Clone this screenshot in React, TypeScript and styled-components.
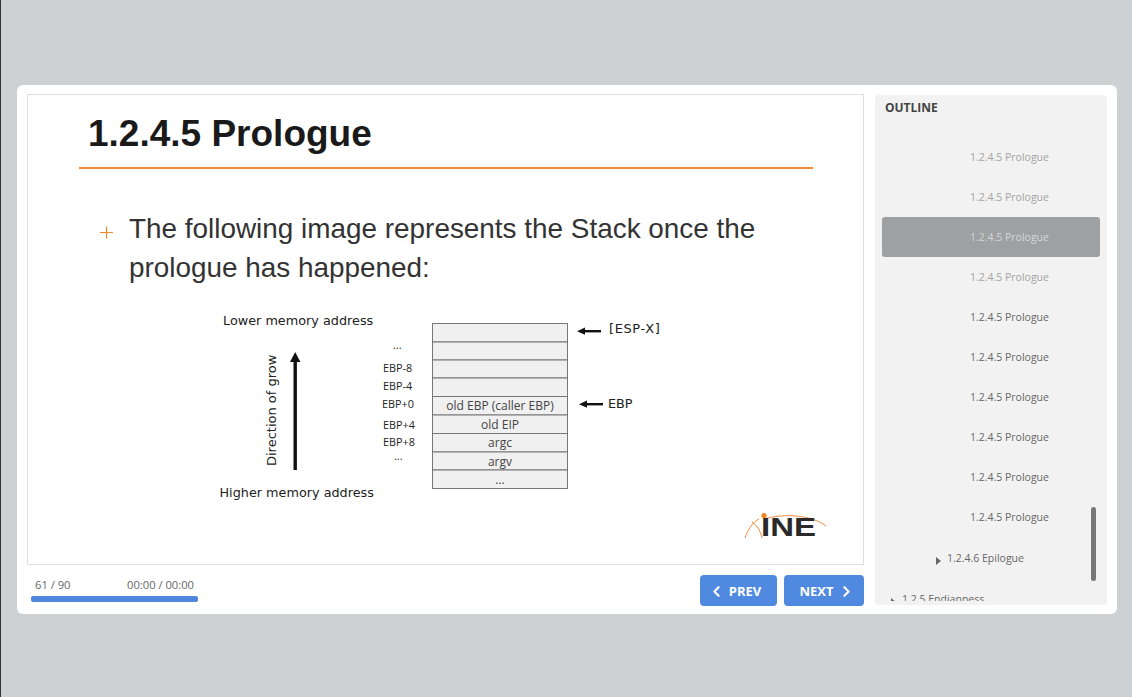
import { FC } from "react";
import styled, { createGlobalStyle } from "styled-components";
import { ChevronLeft, ChevronRight } from "lucide-react";

const GlobalStyle = createGlobalStyle`
  html, body {
    margin: 0;
    padding: 0;
    background: #cdd1d4;
  }
`;

type Tone = "muted" | "selected" | "normal";

const outlineItems: Tone[] = [
  "muted",
  "muted",
  "selected",
  "muted",
  "normal",
  "normal",
  "normal",
  "normal",
  "normal",
  "normal",
];

const stackRows = [
  { y: 323.5, h: 18.5, label: "" },
  { y: 342, h: 18, label: "" },
  { y: 360, h: 18, label: "" },
  { y: 378, h: 18.5, label: "" },
  { y: 396.5, h: 18.5, label: "old EBP (caller EBP)" },
  { y: 415, h: 18.5, label: "old EIP" },
  { y: 433.5, h: 18.5, label: "argc" },
  { y: 452, h: 18, label: "argv" },
  { y: 470, h: 18.5, label: "..." },
];

const offsets = [
  { x: 393, y: 349, label: "..." },
  { x: 383, y: 372, label: "EBP-8" },
  { x: 383, y: 390, label: "EBP-4" },
  { x: 382, y: 408, label: "EBP+0" },
  { x: 383, y: 429, label: "EBP+4" },
  { x: 383, y: 446, label: "EBP+8" },
  { x: 394, y: 460, label: "..." },
];

const StackDiagram: FC = () => (
  <DiagramSvg viewBox="210 308 460 192">
    <text x="223" y="325" fontSize="12.8" fill="#222">
      Lower memory address
    </text>
    <text x="219.5" y="497" fontSize="12.8" fill="#222">
      Higher memory address
    </text>
    <text
      transform="translate(276 466) rotate(-90)"
      fontSize="13"
      fill="#222"
    >
      Direction of grow
    </text>
    <rect x="293.5" y="360" width="3.4" height="110" fill="#111" />
    <polygon points="295.2,352 290,362 300.4,362" fill="#111" />
    {offsets.map((o) => (
      <OffsetLabel key={o.label + o.y} x={o.x} y={o.y}>
        {o.label}
      </OffsetLabel>
    ))}
    {stackRows.map((row) => (
      <g key={row.y}>
        <rect
          x="432.5"
          y={row.y}
          width="135"
          height={row.h}
          fill="#f0f0f0"
          stroke="#777"
        />
        <StackLabel x="500" y={row.y + 13.5}>
          {row.label}
        </StackLabel>
      </g>
    ))}
    <rect x="584" y="330" width="17" height="2.4" fill="#111" />
    <polygon points="577,331.2 585,327.6 585,334.8" fill="#111" />
    <text x="609" y="333" fontSize="13" letterSpacing="0.6" fill="#222">
      [ESP-X]
    </text>
    <rect x="586" y="403" width="17" height="2.4" fill="#111" />
    <polygon points="579,404.2 587,400.6 587,407.8" fill="#111" />
    <text x="608" y="408" fontSize="12.8" fill="#222">
      EBP
    </text>
  </DiagramSvg>
);

const IneLogo: FC = () => (
  <LogoSvg viewBox="0 0 84 30">
    <path
      d="M1 26 C4 17 9 10 15 7 M18 26 C17 20 13 13 8 10"
      fill="none"
      stroke="#f08a3c"
      strokeWidth="1"
    />
    <path
      d="M20 7 C40 1 68 3 82 14"
      fill="none"
      stroke="#f08a3c"
      strokeWidth="1"
    />
    <circle cx="20" cy="3.6" r="2.6" fill="#f5821f" />
    <LogoText x="17" y="24" textLength="55" lengthAdjust="spacingAndGlyphs">
      INE
    </LogoText>
  </LogoSvg>
);

const App: FC = () => (
  <>
    <GlobalStyle />
    <Page>
      <Card>
        <MainColumn>
          <Slide>
            <TitleBlock>
              <Title>1.2.4.5 Prologue</Title>
            </TitleBlock>
            <Bullet>
              <PlusIcon viewBox="0 0 15 15">
                <path d="M7.5 1.5v12M1 7.5h13" stroke="#f5872b" strokeWidth="1.2" />
              </PlusIcon>
              <BulletText>
                The following image represents the Stack once the prologue has
                happened:
              </BulletText>
            </Bullet>
            <StackDiagram />
            <IneLogo />
          </Slide>
          <Footer>
            <Progress>
              <Counters>
                <span>61 / 90</span>
                <span>00:00 / 00:00</span>
              </Counters>
              <ProgressBar />
            </Progress>
            <Buttons>
              <NavButton $width={77} $shift={-4}>
                <ChevronLeft size={17} strokeWidth={3} />
                PREV
              </NavButton>
              <NavButton $width={80} $shift={3}>
                NEXT
                <ChevronRight size={17} strokeWidth={3} />
              </NavButton>
            </Buttons>
          </Footer>
        </MainColumn>
        <Sidebar>
          <SidebarTitle>OUTLINE</SidebarTitle>
          <OutlineList>
            {outlineItems.map((tone, i) => (
              <OutlineRow key={i} $tone={tone}>
                1.2.4.5 Prologue
              </OutlineRow>
            ))}
            <BranchRow $indent={54}>
              <Caret />
              1.2.4.6 Epilogue
            </BranchRow>
            <BranchRow $indent={9}>
              <Caret />
              1.2.5 Endianness
            </BranchRow>
          </OutlineList>
          <Scrollbar />
        </Sidebar>
      </Card>
    </Page>
  </>
);

export default App;

const Page = styled.div`
  box-sizing: border-box;
  height: 697px;
  padding: 85px 0 0 16px;
  border-left: 1px solid #333;
  background: #cdd1d4;
`;

const Card = styled.div`
  box-sizing: border-box;
  display: flex;
  gap: 11px;
  width: 1100px;
  height: 529px;
  padding: 9px 10px 8px;
  background: #fff;
  border-radius: 6px;
`;

const MainColumn = styled.div`
  display: flex;
  flex-direction: column;
  width: 837px;
`;

const Slide = styled.div`
  box-sizing: border-box;
  display: flex;
  flex: none;
  flex-direction: column;
  height: 471px;
  border: 1px solid #dedede;
  font-family: "Liberation Sans", Arial, sans-serif;
`;

const TitleBlock = styled.div`
  box-sizing: border-box;
  height: 74px;
  margin: 0 50px 0 51px;
  padding-left: 9px;
  border-bottom: 2px solid #f08a3c;
`;

const Title = styled.h1`
  margin: 0;
  font-size: 37px;
  line-height: 77px;
  font-weight: 700;
  color: #1a1a1a;
`;

const Bullet = styled.div`
  display: flex;
  gap: 15px;
  margin: 40px 60px 0 71px;
`;

const PlusIcon = styled.svg`
  flex: none;
  width: 15px;
  height: 15px;
  margin-top: 16px;
`;

const BulletText = styled.p`
  margin: 0;
  font-size: 27.9px;
  line-height: 39px;
  color: #333;
`;

const DiagramSvg = styled.svg`
  display: block;
  flex: none;
  width: 460px;
  height: 192px;
  margin: 21px 0 0 182px;
  font-family: "DejaVu Sans", Verdana, sans-serif;
`;

const OffsetLabel = styled.text`
  font-size: 10.8px;
  fill: #222;
  font-family: "Open Sans", sans-serif;
`;

const StackLabel = styled.text`
  font-size: 12px;
  fill: #444;
  text-anchor: middle;
  font-family: "Open Sans", sans-serif;
`;

const LogoSvg = styled.svg`
  display: block;
  flex: none;
  align-self: flex-end;
  width: 84px;
  height: 30px;
  margin: 12px 35px 0 0;
`;

const LogoText = styled.text`
  font-family: "Liberation Sans", Arial, sans-serif;
  font-weight: 700;
  font-size: 25px;
  fill: #2a2a2a;
`;

const Footer = styled.div`
  display: flex;
  justify-content: space-between;
  align-items: flex-start;
  flex: 1;
  padding-top: 10px;
`;

const Progress = styled.div`
  width: 167px;
  margin-left: 4px;
`;

const Counters = styled.div`
  display: flex;
  justify-content: space-between;
  padding: 1px 4px 0 4px;
  font-family: "Open Sans", sans-serif;
  font-size: 11.2px;
  line-height: 18px;
  color: #666;
`;

const ProgressBar = styled.div`
  height: 6px;
  margin-top: 2px;
  background: #4f87de;
  border-radius: 2px;
`;

const Buttons = styled.div`
  display: flex;
  gap: 7px;
`;

const NavButton = styled.button<{ $width: number; $shift: number }>`
  display: flex;
  align-items: center;
  justify-content: center;
  gap: 4px;
  width: ${(p) => p.$width}px;
  height: 31px;
  padding: 1px ${(p) => Math.max(-p.$shift, 0) * 2}px 0
    ${(p) => Math.max(p.$shift, 0) * 2}px;
  border: none;
  border-radius: 4px;
  background: #5089e0;
  color: #fff;
  font-family: "Open Sans", sans-serif;
  font-size: 13px;
  font-weight: 700;
`;

const Sidebar = styled.aside`
  position: relative;
  box-sizing: border-box;
  width: 232px;
  height: 510px;
  margin-top: 1px;
  padding-bottom: 4px;
  display: flex;
  flex-direction: column;
  background: #f2f2f2;
  border-radius: 4px;
  font-family: "Open Sans", sans-serif;
`;

const SidebarTitle = styled.div`
  flex: none;
  height: 42px;
  padding: 4px 0 0 10px;
  box-sizing: border-box;
  font-size: 12px;
  line-height: 17px;
  font-weight: 700;
  color: #444;
`;

const OutlineList = styled.div`
  flex: 1;
  min-height: 0;
  overflow: hidden;
  padding: 0 7px;
`;

const toneColor: Record<Tone, string> = {
  muted: "#a3a3a3",
  selected: "#d4d6d7",
  normal: "#666",
};

const OutlineRow = styled.div<{ $tone: Tone }>`
  box-sizing: border-box;
  height: 40px;
  padding-left: 88px;
  font-size: 10.5px;
  line-height: 40px;
  color: ${(p) => toneColor[p.$tone]};
  background: ${(p) => (p.$tone === "selected" ? "#9da1a4" : "transparent")};
  border-radius: 3px;
`;

const BranchRow = styled.div<{ $indent: number }>`
  display: flex;
  align-items: center;
  height: 40px;
  padding-left: ${(p) => p.$indent}px;
  margin-top: 1px;
  font-size: 10.5px;
  color: #666;
  white-space: nowrap;
`;

const Caret = styled.span`
  flex: none;
  width: 0;
  height: 0;
  margin: 5px 6px 0 0;
  border-top: 4px solid transparent;
  border-bottom: 4px solid transparent;
  border-left: 5px solid #666;
`;

const Scrollbar = styled.div`
  position: absolute;
  top: 412px;
  right: 11px;
  width: 5px;
  height: 74px;
  background: #777;
  border-radius: 3px;
`;
